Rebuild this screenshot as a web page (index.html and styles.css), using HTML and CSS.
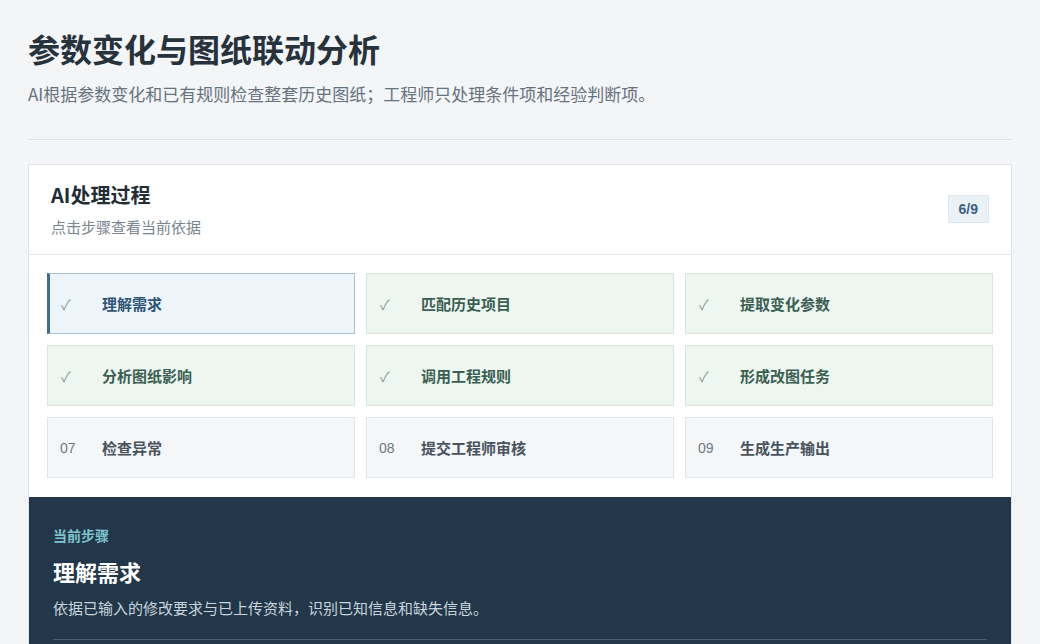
FILE: index.html
```html
<!DOCTYPE html>
<html lang="zh-CN">
<head>
<meta charset="utf-8">
<title>参数变化与图纸联动分析</title>
<link rel="stylesheet" href="styles.css">
</head>
<body>
<main class="page">
  <header class="page-head">
    <h1 class="title">参数变化与图纸联动分析</h1>
    <p class="subtitle">AI根据参数变化和已有规则检查整套历史图纸；工程师只处理条件项和经验判断项。</p>
  </header>
  <section class="card">
    <div class="card-head">
      <div>
        <h2 class="card-title">AI处理过程</h2>
        <p class="card-sub">点击步骤查看当前依据</p>
      </div>
      <span class="badge">6/9</span>
    </div>
    <div class="steps">
      <div class="step done active"><span class="mark">✓</span><span class="label">理解需求</span></div>
      <div class="step done"><span class="mark">✓</span><span class="label">匹配历史项目</span></div>
      <div class="step done"><span class="mark">✓</span><span class="label">提取变化参数</span></div>
      <div class="step done"><span class="mark">✓</span><span class="label">分析图纸影响</span></div>
      <div class="step done"><span class="mark">✓</span><span class="label">调用工程规则</span></div>
      <div class="step done"><span class="mark">✓</span><span class="label">形成改图任务</span></div>
      <div class="step"><span class="mark">07</span><span class="label">检查异常</span></div>
      <div class="step"><span class="mark">08</span><span class="label">提交工程师审核</span></div>
      <div class="step"><span class="mark">09</span><span class="label">生成生产输出</span></div>
    </div>
    <div class="detail">
      <div class="detail-kicker">当前步骤</div>
      <h3 class="detail-title">理解需求</h3>
      <p class="detail-text">依据已输入的修改要求与已上传资料，识别已知信息和缺失信息。</p>
      <div class="detail-rule"></div>
    </div>
  </section>
</main>
</body>
</html>
```

FILE: styles.css
```css
* { box-sizing: border-box; }
html, body { margin: 0; padding: 0; }
body {
  background: #f3f5f7;
  font-family: "Noto Sans CJK SC", "Noto Sans", "Liberation Sans", sans-serif;
  color: #25313b;
  overflow: hidden;
}
.page {
  padding: 26px 28px 0 28px;
}
.page-head {
  border-bottom: 1px solid #dde2e6;
  padding-bottom: 33px;
  margin-bottom: 24px;
}
.title {
  margin: 0;
  font-size: 32px;
  line-height: 44px;
  font-weight: 700;
  color: #26323c;
}
.subtitle {
  margin: 12px 0 0 0;
  font-size: 17px;
  line-height: 24px;
  color: #66727d;
}
.card {
  background: #fff;
  border: 1px solid #e0e4e8;
}
.card-head {
  display: flex;
  justify-content: space-between;
  align-items: center;
  padding: 16px 22px 17px 22px;
  border-bottom: 1px solid #e3e7ea;
}
.card-title {
  margin: 0;
  font-size: 20px;
  line-height: 28px;
  font-weight: 700;
  color: #222d36;
}
.card-sub {
  margin: 8px 0 0 0;
  font-size: 15px;
  line-height: 20px;
  color: #7a858f;
}
.badge {
  background: #eaf2f8;
  border: 1px solid #dce7ef;
  color: #3d5f7e;
  font-family: "Liberation Sans", Arial, sans-serif;
  font-weight: 700;
  font-size: 14px;
  line-height: 26px;
  padding: 0 10px;
}
.steps {
  display: grid;
  grid-template-columns: repeat(3, 1fr);
  gap: 11px;
  padding: 18px 18px 19px 18px;
}
.step {
  height: 61px;
  display: flex;
  align-items: center;
  padding-left: 12px;
  background: #f4f6f8;
  border: 1px solid #e1e5e9;
}
.mark {
  width: 42px;
  font-family: "Liberation Sans", Arial, sans-serif;
  font-size: 14px;
  color: #6f7a84;
}
.label {
  font-size: 15px;
  font-weight: 700;
  color: #48535d;
}
.step.done {
  background: #eef6f2;
  border-color: #d8e6de;
}
.step.done .mark {
  color: #8a968f;
  padding-left: 1px;
}
.step.done .label {
  color: #3b5f50;
}
.step.active {
  background: #eef5fa;
  border-color: #a9c1d3;
  border-left: 3px solid #3f6c8f;
  padding-left: 10px;
}
.step.active .label {
  color: #2f5678;
}
.detail {
  background: #223749;
  padding: 28px 24px 0 24px;
  height: 160px;
}
.detail-kicker {
  font-size: 14px;
  font-weight: 700;
  line-height: 20px;
  color: #7fc3cd;
}
.detail-title {
  margin: 11px 0 0 0;
  font-size: 22px;
  line-height: 30px;
  font-weight: 700;
  color: #ffffff;
}
.detail-text {
  margin: 11px 0 0 0;
  font-size: 15px;
  line-height: 22px;
  color: #c9d4dd;
}
.detail-rule {
  margin-top: 20px;
  border-top: 1px solid #4a6072;
}
```
